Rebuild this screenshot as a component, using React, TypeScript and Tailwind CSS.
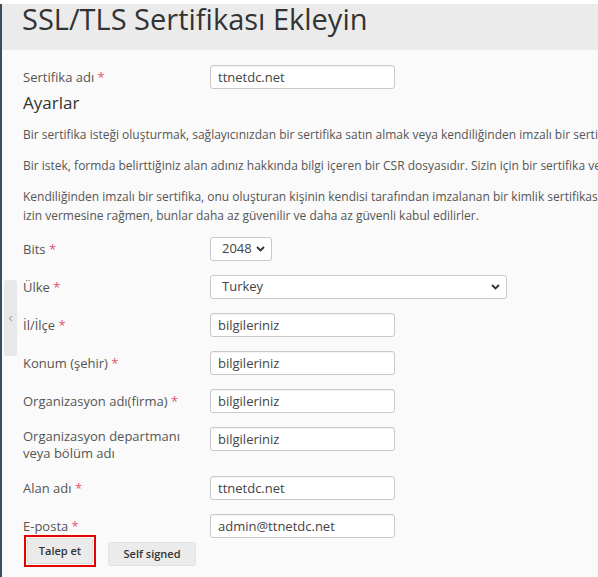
import { ChevronLeft } from 'lucide-react';

const FONT = "font-['Open_Sans',_'Noto_Sans',_sans-serif]";

function Req() {
  return <span className="text-[#e2526b]"> *</span>;
}

function Chevron() {
  return (
    <svg width="9" height="6" viewBox="0 0 9 6" className="shrink-0">
      <path d="M1 1l3.5 3.5L8 1" fill="none" stroke="#333" strokeWidth="1.8" />
    </svg>
  );
}

function Row({ label, required = true, children, twoLine = false }: {
  label: React.ReactNode;
  required?: boolean;
  children: React.ReactNode;
  twoLine?: boolean;
}) {
  return (
    <div className="flex items-start">
      <div
        className={
          twoLine
            ? 'w-[187px] shrink-0 pt-px text-[13px] leading-[17px] text-[#555]'
            : 'w-[187px] shrink-0 pt-[3px] text-[13px] leading-[18px] text-[#555]'
        }
      >
        {label}
        {required && <Req />}
      </div>
      {children}
    </div>
  );
}

function TextInput({ value }: { value: string }) {
  return (
    <div className="w-[185px] h-[24px] shrink-0 rounded-[3px] border border-[#c9c9c9] bg-white pl-[7px] text-[13px] leading-[22px] text-[#444] shadow-[inset_0_1px_1px_rgba(0,0,0,0.05)]">
      {value}
    </div>
  );
}

function SelectBox({ value, width }: { value: string; width: string }) {
  return (
    <div
      className={`${width} h-[24px] shrink-0 flex items-center justify-between rounded-[3px] border border-[#c9c9c9] bg-white pl-[11px] pr-[6px] text-[13px] text-[#444]`}
    >
      <span>{value}</span>
      <Chevron />
    </div>
  );
}

export default function App() {
  return (
    <div className={`w-[598px] h-[577px] overflow-hidden bg-white ${FONT}`}>
      <div className="h-[4px] bg-white" />
      <div className="relative h-[573px] border-l-2 border-[#3d4b5a] bg-[#fafafa]">
        {/* Başlık */}
        <div className="h-[46px] bg-[#ebebeb] pl-[20px]">
          <h1 className="text-[29px] leading-[30px] text-[#333] whitespace-nowrap">
            SSL/TLS Sertifikası Ekleyin
          </h1>
        </div>

        {/* Kenar sekmesi */}
        <div className="absolute left-[2px] top-[276px] w-[13px] h-[76px] rounded-[3px] bg-[#e8e8e8] flex items-center justify-center">
          <ChevronLeft className="w-[9px] h-[9px] text-[#666]" strokeWidth={2} />
        </div>

        <div className="pl-[21px] pt-[15px]">
          <Row label="Sertifika adı">
            <TextInput value="ttnetdc.net" />
          </Row>

          <h2 className="mt-[3px] text-[17px] leading-[22px] text-[#333]">Ayarlar</h2>

          <div className="mt-[11px] text-[12px] leading-[19px] text-[#555] whitespace-nowrap">
            <p className="mb-[12px]">
              Bir sertifika isteği oluşturmak, sağlayıcınızdan bir sertifika satın almak veya kendiliğinden imzalı bir sertifika oluşturmak için aşağıdaki formu doldurun.
            </p>
            <p className="mb-[12px]">
              Bir istek, formda belirttiğiniz alan adınız hakkında bilgi içeren bir CSR dosyasıdır. Sizin için bir sertifika vermesi için bu dosyayı sağlayıcınıza gönderin.
            </p>
            <p>
              Kendiliğinden imzalı bir sertifika, onu oluşturan kişinin kendisi tarafından imzalanan bir kimlik sertifikasıdır. Kendiliğinden imzalı sertifikalar verilerin şifrelenmesine
              <br />
              izin vermesine rağmen, bunlar daha az güvenilir ve daha az güvenli kabul edilirler.
            </p>
          </div>

          <div className="mt-[12px] flex flex-col gap-[14px]">
            <Row label="Bits">
              <SelectBox value="2048" width="w-[62px]" />
            </Row>
            <Row label="Ülke">
              <SelectBox value="Turkey" width="w-[297px]" />
            </Row>
            <Row label="İl/İlçe">
              <TextInput value="bilgileriniz" />
            </Row>
            <Row label="Konum (şehir)">
              <TextInput value="bilgileriniz" />
            </Row>
            <Row label="Organizasyon adı(firma)">
              <TextInput value="bilgileriniz" />
            </Row>
            <Row
              twoLine
              required={false}
              label={
                <>
                  Organizasyon departmanı
                  <br />
                  veya bölüm adı
                </>
              }
            >
              <TextInput value="bilgileriniz" />
            </Row>
            <Row label="Alan adı">
              <TextInput value="ttnetdc.net" />
            </Row>
            <Row label="E-posta">
              <TextInput value="admin@ttnetdc.net" />
            </Row>
          </div>

          {/* Butonlar */}
          <div className="-mt-[3px] ml-px flex items-end gap-[12px]">
            <div className="w-[72px] h-[32px] border-2 border-[#e60000] flex items-center justify-center">
              <button className="w-[66px] h-[26px] rounded-[2px] border border-[#dcdcdc] bg-[#ebebeb] text-[11px] font-semibold text-[#333]">
                Talep et
              </button>
            </div>
            <button className="mb-px w-[88px] h-[24px] rounded-[2px] border border-[#e2e2e2] bg-[#ebebeb] text-[11px] font-semibold text-[#333]">
              Self signed
            </button>
          </div>
        </div>
      </div>
    </div>
  );
}
